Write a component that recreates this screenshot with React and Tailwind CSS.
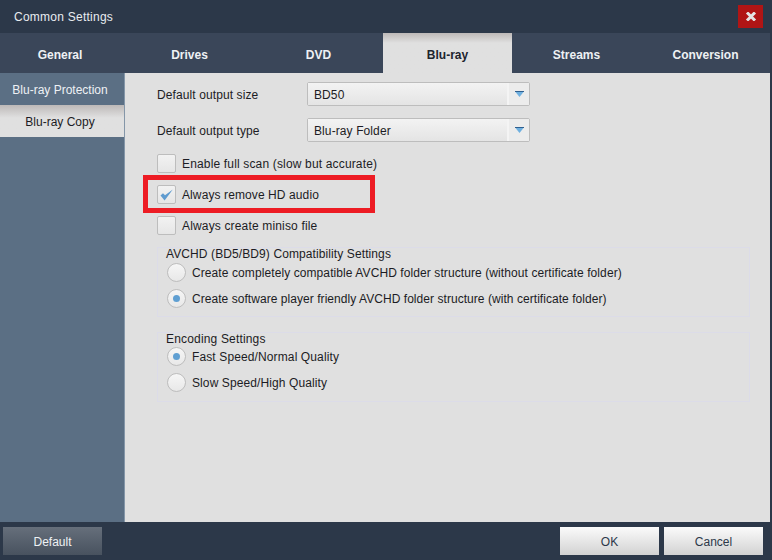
const tabs = ['Drives', 'DVD', 'Blu-ray', 'Streams', 'Conversion'];

const Checkbox = ({ checked, label, className = '' }) => (
  <div className={`flex items-center gap-[6px] h-[19px] ${className}`}>
    <div className="w-[19px] h-[19px] shrink-0 rounded-[2px] border border-[#bdbdbd] bg-gradient-to-b from-[#f2f2f2] to-[#e6e6e6] flex items-center justify-center">
      {checked && (
        <svg width="13" height="12" viewBox="0 0 13 12">
          <path d="M0.5 6.5 L4.6 11.5 L12.8 0.5 L5 6.2 L3 4.2 Z" fill="#5f9bcf" />
        </svg>
      )}
    </div>
    <span className="pt-[1px]">{label}</span>
  </div>
);

const Radio = ({ checked, label, className = '' }) => (
  <div className={`flex items-center gap-[6px] h-[19px] ${className}`}>
    <div className="w-[19px] h-[19px] shrink-0 rounded-full border border-[#bdbdbd] bg-gradient-to-b from-[#f6f6f6] to-[#e8e8e8] flex items-center justify-center">
      {checked && <div className="w-[7px] h-[7px] rounded-full bg-[#5f9fd2]" />}
    </div>
    <span>{label}</span>
  </div>
);

const Select = ({ value, className = '' }) => (
  <div className={`flex w-[223px] h-[24px] rounded-[2px] border border-[#bdbdbd] bg-[#e6e6e6] ${className}`}>
    <div className="flex-1 flex items-center pl-[6px] pt-[1px] border-r-2 border-[#f4f4f4] bg-gradient-to-b from-[#f3f3f3] to-[#e4e4e4]">
      {value}
    </div>
    <div className="w-[20px] flex items-center justify-center bg-[#ececec]">
      <svg width="9" height="6" viewBox="0 0 9 6">
        <path d="M0 0 H9 V1 H0 Z" fill="#2f5f8f" />
        <path d="M0.5 1 H8.5 L4.5 6 Z" fill="#6fb0e0" />
      </svg>
    </div>
  </div>
);

const Row = ({ label, value, className = '' }) => (
  <div className={`flex items-center ${className}`}>
    <span className="w-[150px] pt-[1px]">{label}</span>
    <Select value={value} />
  </div>
);

export default function App() {
  return (
    <div className="relative w-[772px] h-[560px] flex flex-col overflow-hidden bg-[#2c3849] text-[12px] text-[#1c1c24] font-['Liberation_Sans',Arial,sans-serif]">
      {/* title bar */}
      <div className="h-[33px] shrink-0 flex items-center justify-between pl-[14px] pr-[9px] text-[#e8ecf0]">
        <span className="pt-[1px] tracking-[0.25px]">Common Settings</span>
        <div className="w-[25px] h-[23px] mt-[-1px] bg-[#b01515] flex items-center justify-center">
          <svg width="12" height="9" viewBox="0 0 12 9">
            <path d="M2 0.5 L10 8.5 M10 0.5 L2 8.5" stroke="#e4e4e4" strokeWidth="3" />
          </svg>
        </div>
      </div>

      {/* tabs */}
      <div className="h-[40px] shrink-0 flex w-[770px] bg-[#3a4659] font-bold text-[#eef1f4]">
        <div className="w-[125px] pr-[5px] pt-[3px] flex items-center justify-center">General</div>
        {tabs.map((t) => (
          <div
            key={t}
            className={
              t === 'Blu-ray'
                ? 'w-[129px] pt-[3px] flex items-center justify-center text-[#20242e] bg-gradient-to-b from-[#bdb9b8] from-0% to-[#e0e0e0] to-25%'
                : 'w-[129px] pt-[3px] flex items-center justify-center'
            }
          >
            {t}
          </div>
        ))}
      </div>

      {/* body */}
      <div className="flex-1 flex w-[770px] min-h-0">
        <div className="w-[125px] shrink-0 bg-[#5b6f84] border-r border-[#8496a8]">
          <div className="h-[32px] pr-[4px] pt-[2px] flex items-center justify-center text-[#eef1f4]">Blu-ray Protection</div>
          <div className="h-[32px] pr-[4px] pt-[2px] flex items-center justify-center bg-gradient-to-b from-[#bdb9b8] from-0% to-[#e0e0e0] to-40%">Blu-ray Copy</div>
        </div>

        <div className="flex-1 bg-[#e0e0e0] pl-[32px] pt-[9px] tracking-[0.1px]">
          <Row label="Default output size" value="BD50" />
          <Row label="Default output type" value="Blu-ray Folder" className="mt-[12px]" />
          <Checkbox label="Enable full scan (slow but accurate)" className="mt-[12px] tracking-[0.16px]" />
          <Checkbox checked label="Always remove HD audio" className="mt-[12px]" />
          <Checkbox label="Always create miniso file" className="mt-[12px] tracking-[0.16px]" />

          <div className="mt-[12px] w-[593px] h-[70px] border border-[#dcdce8] pl-[9px]">
            <div className="-ml-[1px] leading-[12px]">AVCHD (BD5/BD9) Compatibility Settings</div>
            <Radio label="Create completely compatible AVCHD folder structure (without certificate folder)" className="mt-[3px] tracking-[0.09px]" />
            <Radio checked label="Create software player friendly AVCHD folder structure (with certificate folder)" className="mt-[7px] tracking-[0.05px]" />
          </div>

          <div className="mt-[15px] w-[593px] h-[70px] border border-[#dcdce8] pl-[9px]">
            <div className="-ml-[1px] leading-[12px] tracking-[0.17px]">Encoding Settings</div>
            <Radio checked label="Fast Speed/Normal Quality" className="mt-[2px] tracking-[0.12px]" />
            <Radio label="Slow Speed/High Quality" className="mt-[7px]" />
          </div>
        </div>
      </div>

      {/* footer */}
      <div className="h-[38px] shrink-0 flex items-center justify-between pl-[3px] pr-[9px]">
        <button className="w-[99px] h-[28px] pt-[1px] bg-gradient-to-b from-[#666f7b] to-[#48525f] text-[#eef1f4]">Default</button>
        <div className="flex gap-[5px]">
          <button className="w-[99px] h-[28px] pt-[1px] bg-gradient-to-b from-[#fbfbfb] to-[#d2d2d2] text-[#2c3849]">OK</button>
          <button className="w-[99px] h-[28px] pt-[1px] bg-gradient-to-b from-[#fbfbfb] to-[#d2d2d2] text-[#2c3849]">Cancel</button>
        </div>
      </div>

      {/* annotation */}
      <div className="absolute left-[143px] top-[175px] w-[232px] h-[38px] border-[5px] border-[#ed1c24]" />
    </div>
  );
}
